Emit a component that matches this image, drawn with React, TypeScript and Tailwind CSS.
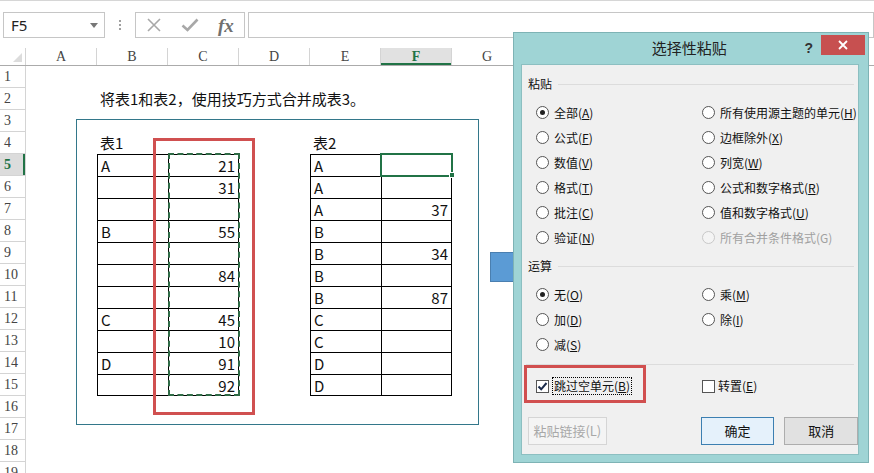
import React from 'react';

const COLS = ['A', 'B', 'C', 'D', 'E', 'F', 'G', 'H', 'I', 'J', 'K', 'L'];
const ROWS = Array.from({ length: 19 }, (_, i) => i + 1);

const table1 = [
  ['A', '21'], ['', '31'], ['', ''], ['B', '55'], ['', ''], ['', '84'],
  ['', ''], ['C', '45'], ['', '10'], ['D', '91'], ['', '92'],
];
const table2 = [
  ['A', ''], ['A', ''], ['A', '37'], ['B', ''], ['B', '34'], ['B', ''],
  ['B', '87'], ['C', ''], ['C', ''], ['D', ''], ['D', ''],
];

const cellFont = { fontFamily: '"Noto Sans CJK SC", "Noto Sans", sans-serif' };
const headFont = { fontFamily: '"Liberation Serif", "DejaVu Serif", serif' };

function getCell(row: number, col: number): { text: string; right: boolean; border: string } {
  let text = '';
  let right = false;
  let border = '';
  if (row === 2 && col === 1) text = '将表1和表2，使用技巧方式合并成表3。';
  if (row === 4 && col === 1) text = '表1';
  if (row === 4 && col === 4) text = '表2';
  if (row >= 5 && row <= 15) {
    const data = col === 1 || col === 2 ? table1 : col === 4 || col === 5 ? table2 : null;
    if (data) {
      const first = col === 1 || col === 4;
      text = data[row - 5][first ? 0 : 1];
      right = !first;
      border = 'border-black border-l border-t';
      if (!first) border += ' border-r';
      if (row === 15) border += ' border-b';
    }
  }
  return { text, right, border };
}

const Radio = ({ checked, disabled, label }: { checked?: boolean; disabled?: boolean; label: React.ReactNode }) => (
  <div className={`flex items-center gap-[5px] h-[25px] ${disabled ? 'text-[#a0a0a0]' : 'text-[#111]'}`}>
    <span
      className={`w-[13px] h-[13px] rounded-full border flex items-center justify-center ${
        disabled ? 'border-[#c8c8c8] bg-[#f4f4f4]' : 'border-[#555] bg-white'
      }`}
    >
      {checked && <span className="w-[5px] h-[5px] rounded-full bg-[#222]" />}
    </span>
    <span className="whitespace-nowrap">{label}</span>
  </div>
);

const Check = ({ checked }: { checked?: boolean }) => (
  <span className="w-[13px] h-[13px] border border-[#555] bg-white flex items-center justify-center">
    {checked && (
      <svg width="11" height="11" viewBox="0 0 11 11">
        <path d="M1.5 5.5 L4.2 8.3 L9.5 2" fill="none" stroke="#1a2a4a" strokeWidth="2" />
      </svg>
    )}
  </span>
);

const Acc = ({ pre, k, post = ')' }: { pre: string; k: string; post?: string }) => (
  <>
    {pre}
    <u>{k}</u>
    {post}
  </>
);

const GroupLabel = ({ text }: { text: string }) => (
  <div className="flex items-center h-[16px] pl-[6px] pr-[4px]">
    <span>{text}</span>
    <span className="flex-1 ml-[6px] h-px bg-[#dcdcdc]" />
  </div>
);

const PasteDialog = () => (
  <div className="absolute left-[513px] top-[32px] w-[356px] h-[431px] bg-[#9fd4d5] border border-[#7eb3b5] text-[12px]" style={cellFont}>
    <div className="h-[31px] flex items-center pr-[3px]">
      <span className="flex-1 pl-[60px] text-center text-[15px] text-[#222]">选择性粘贴</span>
      <span className="mr-[8px] text-[14px] font-bold text-[#333]" style={{ fontFamily: '"Liberation Sans", sans-serif' }}>?</span>
      <span className="self-start mt-[2px] w-[44px] h-[20px] bg-[#c75050] flex items-center justify-center">
        <svg width="10" height="10" viewBox="0 0 10 10">
          <path d="M1 1 L9 9 M9 1 L1 9" stroke="white" strokeWidth="1.8" />
        </svg>
      </span>
    </div>
    <div className="relative ml-[7px] w-[338px] h-[391px] bg-[#f0f0f0] border border-[#8cbfc1] pt-[11px] text-[#111]">
      <GroupLabel text="粘贴" />
      <div className="mt-[8px] pl-[14px] grid grid-cols-[166px_1fr]">
        <Radio checked label={<Acc pre="全部(" k="A" />} />
        <Radio label={<Acc pre="所有使用源主题的单元(" k="H" />} />
        <Radio label={<Acc pre="公式(" k="F" />} />
        <Radio label={<Acc pre="边框除外(" k="X" />} />
        <Radio label={<Acc pre="数值(" k="V" />} />
        <Radio label={<Acc pre="列宽(" k="W" />} />
        <Radio label={<Acc pre="格式(" k="T" />} />
        <Radio label={<Acc pre="公式和数字格式(" k="R" />} />
        <Radio label={<Acc pre="批注(" k="C" />} />
        <Radio label={<Acc pre="值和数字格式(" k="U" />} />
        <Radio label={<Acc pre="验证(" k="N" />} />
        <Radio disabled label="所有合并条件格式(G)" />
      </div>
      <div className="mt-[8px]">
        <GroupLabel text="运算" />
      </div>
      <div className="mt-[8px] pl-[14px] grid grid-cols-[166px_1fr]">
        <Radio checked label={<Acc pre="无(" k="O" />} />
        <Radio label={<Acc pre="乘(" k="M" />} />
        <Radio label={<Acc pre="加(" k="D" />} />
        <Radio label={<Acc pre="除(" k="I" />} />
        <Radio label={<Acc pre="减(" k="S" />} />
      </div>
      <div className="mt-[7px] mx-[4px] h-px bg-[#dcdcdc]" />
      <div className="mt-[9px] h-[24px] flex items-center pl-[14px]">
        <Check checked />
        <span className="ml-[3px] border border-dotted border-black px-px leading-[16px]">
          <Acc pre="跳过空单元(" k="B" />
        </span>
        <span className="ml-[70px]">
          <Check />
        </span>
        <span className="ml-[3px]">
          <Acc pre="转置(" k="E" />
        </span>
      </div>
      <div className="mt-[19px] flex pl-[6px] text-[13px]">
        <button className="w-[79px] h-[28px] border border-[#d5d5d5] bg-[#f4f4f4] text-[#a8a8a8]">
          粘贴链接(L)
        </button>
        <button className="ml-[94px] w-[74px] h-[28px] border border-[#3c7fb1] bg-[#e5f1fb] text-[#111]">
          确定
        </button>
        <button className="ml-[10px] w-[74px] h-[28px] border border-[#adadad] bg-[#e1e1e1] text-[#111]">
          取消
        </button>
      </div>
      <div className="absolute left-[2px] top-[300px] w-[122px] h-[38px] border-[3px] border-[#d14f4f]" />
    </div>
  </div>
);

export default function App() {
  return (
    <div className="relative w-[874px] h-[473px] overflow-hidden bg-white">
      {/* formula bar */}
      <div className="h-[48px] border-t border-[#d6d6d6] flex items-start pt-[11px] pl-[3px]">
        <div className="w-[102px] h-[26px] border border-[#c6c6c6] flex items-center justify-between pl-[7px] pr-[6px]">
          <span className="text-[15px] text-[#222]" style={{ fontFamily: '"Noto Sans", sans-serif' }}>F5</span>
          <svg width="8" height="5" viewBox="0 0 8 5">
            <path d="M0 0 H8 L4 5 Z" fill="#777" />
          </svg>
        </div>
        <div className="w-[30px] h-[26px] flex flex-col items-center justify-center gap-[2px]">
          <span className="w-[2px] h-[2px] bg-[#a0a0a0]" />
          <span className="w-[2px] h-[2px] bg-[#a0a0a0]" />
          <span className="w-[2px] h-[2px] bg-[#a0a0a0]" />
        </div>
        <div className="w-[110px] h-[26px] border border-[#c6c6c6] flex items-center pl-[10px]">
          <svg width="16" height="16" viewBox="0 0 16 16">
            <path d="M2 2 L14 14 M14 2 L2 14" stroke="#a8a8a8" strokeWidth="1.6" />
          </svg>
          <svg className="ml-[19px]" width="18" height="16" viewBox="0 0 18 16">
            <path d="M1.5 8.5 L6.5 13 L16.5 2.5" fill="none" stroke="#a8a8a8" strokeWidth="2.6" />
          </svg>
          <span
            className="ml-[19px] text-[19px] italic font-bold text-[#707070] leading-none"
            style={{ fontFamily: '"Liberation Serif", serif' }}
          >
            fx
          </span>
        </div>
        <div className="ml-[3px] flex-1 h-[26px] border border-[#c6c6c6]" />
      </div>

      {/* column headers */}
      <div className="flex h-[18px] border-b border-[#ababab] text-[14px] text-[#444]" style={headFont}>
        <div className="w-[26px] shrink-0 border-r border-[#d4d4d4] flex items-end justify-end p-[3px]">
          <svg width="9" height="9" viewBox="0 0 9 9">
            <path d="M9 0 V9 H0 Z" fill="#dcdcdc" />
          </svg>
        </div>
        {COLS.map((c) => (
          <div
            key={c}
            className={`w-[71px] shrink-0 border-r border-[#d4d4d4] flex items-center justify-center ${
              c === 'F' ? 'bg-[#e1e1e1] text-[#217346] font-bold shadow-[inset_0_-2px_0_#217346]' : ''
            }`}
          >
            {c}
          </div>
        ))}
      </div>

      {/* sheet body */}
      <div className="relative">
        {ROWS.map((r) => (
          <div key={r} className="flex h-[22px]">
            <div
              className={`w-[26px] shrink-0 border-r border-b border-[#d4d4d4] flex items-center pl-[4px] text-[14px] ${
                r === 5
                  ? 'bg-[#dcdcdc] text-[#217346] font-bold shadow-[inset_-2px_0_0_#217346]'
                  : 'text-[#444]'
              }`}
              style={headFont}
            >
              {r}
            </div>
            {COLS.map((_, ci) => {
              const cell = getCell(r, ci);
              return (
                <div
                  key={ci}
                  className={`w-[71px] shrink-0 h-[22px] px-[3px] text-[15px] leading-[21px] text-[#111] whitespace-nowrap ${
                    cell.right ? 'text-right' : ''
                  } ${cell.border}`}
                  style={cellFont}
                >
                  {cell.text}
                </div>
              );
            })}
          </div>
        ))}

        {/* drawing shapes over the sheet */}
        <div className="absolute left-[76px] top-[53px] w-[403px] h-[306px] border border-[#33778a]" />
        <div className="absolute left-[168px] top-[87px] w-[72px] h-[243px] border-2 border-dashed border-[#2f6b46]" />
        <div className="absolute left-[153px] top-[72px] w-[102px] h-[277px] border-[3px] border-[#d05050]" />
        <div className="absolute left-[380px] top-[87px] w-[73px] h-[24px] border-2 border-[#217346]" />
        <div className="absolute left-[449px] top-[106px] w-[6px] h-[6px] bg-[#217346] border border-white" />
        <div className="absolute left-[490px] top-[186px] w-[30px] h-[30px] bg-[#5b9bd5] border border-[#4a7fb0]" />
      </div>

      <PasteDialog />
    </div>
  );
}
